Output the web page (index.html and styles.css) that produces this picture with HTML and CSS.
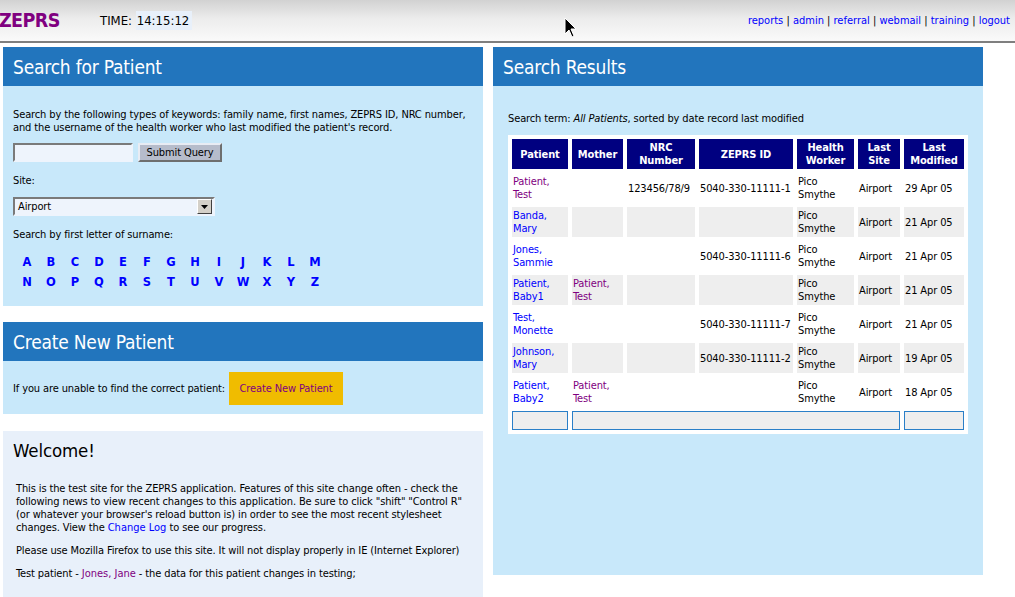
FILE: index.html
```html
<!DOCTYPE html>
<html>
<head>
<meta charset="utf-8">
<title>ZEPRS</title>
<link rel="stylesheet" href="styles.css">
</head>
<body>
<header class="topbar">
  <div class="brand">ZEPRS</div>
  <div class="clock">TIME: <span class="clock-val">14:15:12</span></div>
  <nav class="toplinks">
    <a href="#">reports</a> | <a href="#">admin</a> | <a href="#">referral</a> | <a href="#">webmail</a> | <a href="#">training</a> | <a href="#">logout</a>
  </nav>
</header>
<svg class="cursor" width="14" height="22" viewBox="0 0 14 22"><path d="M1 1 L1 17 L5 13 L8 20 L10 19 L7 12 L12 12 Z" fill="#000" stroke="#fff" stroke-width="1"/></svg>
<main class="layout">
  <div class="col-left">
    <section class="panel">
      <h2 class="panel-title">Search for Patient</h2>
      <div class="panel-body search-body">
        <p class="intro">Search by the following types of keywords: family name, first names, ZEPRS ID, NRC number, and the username of the health worker who last modified the patient's record.</p>
        <div class="query-row">
          <input class="query-input" type="text">
          <button class="query-btn">Submit Query</button>
        </div>
        <p class="label">Site:</p>
        <div class="select">
          <span class="select-val">Airport</span>
          <span class="select-btn"><svg width="7" height="4" viewBox="0 0 7 4"><path d="M0 0h7L3.5 4z" fill="#000"/></svg></span>
        </div>
        <p class="label">Search by first letter of surname:</p>
        <div class="letters">
          <a href="#">A</a><a href="#">B</a><a href="#">C</a><a href="#">D</a><a href="#">E</a><a href="#">F</a><a href="#">G</a><a href="#">H</a><a href="#">I</a><a href="#">J</a><a href="#">K</a><a href="#">L</a><a href="#">M</a>
          <a href="#">N</a><a href="#">O</a><a href="#">P</a><a href="#">Q</a><a href="#">R</a><a href="#">S</a><a href="#">T</a><a href="#">U</a><a href="#">V</a><a href="#">W</a><a href="#">X</a><a href="#">Y</a><a href="#">Z</a>
        </div>
      </div>
    </section>
    <section class="panel create">
      <h2 class="panel-title">Create New Patient</h2>
      <div class="panel-body create-body">
        <span>If you are unable to find the correct patient:</span>
        <a class="create-btn visited" href="#">Create New Patient</a>
      </div>
    </section>
    <section class="welcome">
      <h1 class="welcome-title">Welcome!</h1>
      <p>This is the test site for the ZEPRS application. Features of this site change often - check the following news to view recent changes to this application. Be sure to click "shift" "Control R" (or whatever your browser's reload button is) in order to see the most recent stylesheet changes. View the <a href="#">Change Log</a> to see our progress.</p>
      <p>Please use Mozilla Firefox to use this site. It will not display properly in IE (Internet Explorer)</p>
      <p>Test patient - <a class="visited" href="#">Jones, Jane</a> - the data for this patient changes in testing;</p>
    </section>
  </div>
  <div class="col-right">
    <section class="panel results">
      <h2 class="panel-title">Search Results</h2>
      <div class="panel-body results-body">
        <p class="term">Search term: <em>All Patients</em>, sorted by date record last modified</p>
        <table class="grid">
          <colgroup>
            <col class="c-pat"><col class="c-mom"><col class="c-nrc"><col class="c-id"><col class="c-hw"><col class="c-site"><col class="c-mod">
          </colgroup>
          <thead>
            <tr><th>Patient</th><th>Mother</th><th>NRC<br>Number</th><th>ZEPRS ID</th><th>Health<br>Worker</th><th>Last<br>Site</th><th>Last<br>Modified</th></tr>
          </thead>
          <tbody>
            <tr><td><a class="visited" href="#">Patient,<br>Test</a></td><td></td><td>123456/78/9</td><td>5040-330-11111-1</td><td>Pico<br>Smythe</td><td>Airport</td><td>29 Apr 05</td></tr>
            <tr class="alt"><td><a href="#">Banda,<br>Mary</a></td><td></td><td></td><td></td><td>Pico<br>Smythe</td><td>Airport</td><td>21 Apr 05</td></tr>
            <tr><td><a href="#">Jones,<br>Sammie</a></td><td></td><td></td><td>5040-330-11111-6</td><td>Pico<br>Smythe</td><td>Airport</td><td>21 Apr 05</td></tr>
            <tr class="alt"><td><a href="#">Patient,<br>Baby1</a></td><td><a class="visited" href="#">Patient,<br>Test</a></td><td></td><td></td><td>Pico<br>Smythe</td><td>Airport</td><td>21 Apr 05</td></tr>
            <tr><td><a href="#">Test,<br>Monette</a></td><td></td><td></td><td>5040-330-11111-7</td><td>Pico<br>Smythe</td><td>Airport</td><td>21 Apr 05</td></tr>
            <tr class="alt"><td><a href="#">Johnson,<br>Mary</a></td><td></td><td></td><td>5040-330-11111-2</td><td>Pico<br>Smythe</td><td>Airport</td><td>19 Apr 05</td></tr>
            <tr><td><a href="#">Patient,<br>Baby2</a></td><td><a class="visited" href="#">Patient,<br>Test</a></td><td></td><td></td><td>Pico<br>Smythe</td><td>Airport</td><td>18 Apr 05</td></tr>
          </tbody>
          <tfoot>
            <tr><td></td><td colspan="5"></td><td></td></tr>
          </tfoot>
        </table>
      </div>
    </section>
  </div>
</main>
</body>
</html>
```
FILE: styles.css
```css
* { box-sizing: border-box; }
html, body { margin: 0; padding: 0; background: #fff; }
body {
  font-family: Tahoma, "DejaVu Sans Condensed", "DejaVu Sans", sans-serif;
  font-size: 11px;
  line-height: 13px;
  letter-spacing: -0.12px;
  color: #000;
  overflow: hidden;
}
a { color: #0000ff; text-decoration: none; }
a.visited { color: #800080; }
p { margin: 0; }

.topbar {
  height: 43px;
  display: flex;
  align-items: center;
  background: linear-gradient(#d2d2d2, #ececec 45%, #fafafa);
  border-bottom: 2px solid #7f7f7f;
  padding-top: 0;
}
.brand {
  flex: 0 0 101px;
  color: #800080;
  font-weight: bold;
  font-size: 19.5px;
  letter-spacing: -0.6px;
  margin-left: -1px;
}
.clock { font-size: 13px; letter-spacing: 0; }
.clock-val { background: #e8f0fa; padding: 2px 3px 2px 1px; }
.toplinks {
  margin-left: auto;
  padding-right: 5px;
  font-size: 11px;
  letter-spacing: 0;
}
.cursor { position: absolute; left: 564px; top: 17px; }

.layout {
  display: flex;
  gap: 10px;
  padding: 4px 0 0 3px;
  align-items: flex-start;
}
.col-left { width: 480px; display: flex; flex-direction: column; }
.col-right { width: 490px; }

.panel-title {
  margin: 0;
  height: 39px;
  background: #2275bd;
  color: #fff;
  font-weight: normal;
  font-size: 19px;
  letter-spacing: -0.2px;
  line-height: 40px;
  padding-left: 10px;
}
.panel-body { background: #c8e8fa; }

.search-body { padding: 22px 10px 14px 10px; }
.query-row { display: flex; align-items: center; margin-top: 9px; height: 19px; }
.query-input {
  width: 120px; height: 19px; margin: 0;
  background: #eef4fc;
  border: 2px solid; border-color: #7a7a7a #eef4fc #eef4fc #7a7a7a;
  padding: 0;
}
.query-btn {
  margin: 0 0 0 5px; height: 19px; width: 84px; padding: 0;
  font: inherit;
  letter-spacing: inherit;
  background: #b6bccb;
  border: 2px solid; border-color: #e8ecf4 #6e6e6e #6e6e6e #e8ecf4;
  color: #000;
}
.label { margin-top: 12px; }
.select {
  margin-top: 10px;
  width: 202px; height: 19px;
  display: flex; align-items: center;
  background: #eef4fc;
  border: 2px solid; border-color: #7a7a7a #eef4fc #eef4fc #7a7a7a;
}
.select-val { flex: 1; padding-left: 3px; }
.select-btn {
  width: 15px; height: 15px; margin-right: 1px;
  background: #d4d0c8;
  border: 1px solid; border-color: #fff #404040 #404040 #fff;
  display: flex; align-items: center; justify-content: center;
}
.letters {
  margin: 11px 0 0 2px;
  display: grid;
  grid-template-columns: repeat(13, 24px);
  grid-auto-rows: 20px;
  align-items: center;
  font-family: "DejaVu Sans", sans-serif;
  font-weight: bold;
  font-size: 11.5px;
  letter-spacing: 0;
}
.letters a { text-align: center; }

.create { margin-top: 16px; }
.create-body {
  height: 53px;
  display: flex; align-items: center;
  padding: 2px 10px 0 10px;
}
.create-btn {
  margin-left: 4px;
  width: 114px; height: 33px;
  background: #f0bc00;
  display: flex; align-items: center; justify-content: center;
}

.welcome {
  margin-top: 17px;
  background: #e8f0fa;
  padding: 10px 10px 20px 10px;
  height: 200px;
}
.welcome-title {
  margin: 0;
  font-size: 18.5px;
  font-weight: normal;
  line-height: 20px;
}
.welcome p { margin: 0 0 10px 3px; }
.welcome p:first-of-type { margin-top: 21px; }
.welcome a { letter-spacing: 0; }

.results-body { height: 489px; padding: 26px 15px 0 15px; }
.term { margin-bottom: 10px; }
.grid {
  width: 460px;
  table-layout: fixed;
  border-collapse: separate;
  border-spacing: 4px;
  background: #fff;
}
.c-pat { width: 56px; } .c-mom { width: 51px; } .c-nrc { width: 68px; }
.c-id { width: 94px; } .c-hw { width: 57px; } .c-site { width: 42px; } .c-mod { width: 60px; }
.grid th {
  background: #000080; color: #fff; font-weight: bold;
  height: 30px; padding: 0; text-align: center; vertical-align: middle;
}
.grid td {
  height: 30px; padding: 0 0 0 1px; vertical-align: middle; white-space: nowrap;
}
.grid tr.alt td { background: #eeeeee; }
.grid tfoot td {
  height: 19px;
  background: #eeeeee;
  border: 1px solid #2a7fc8;
}
```
